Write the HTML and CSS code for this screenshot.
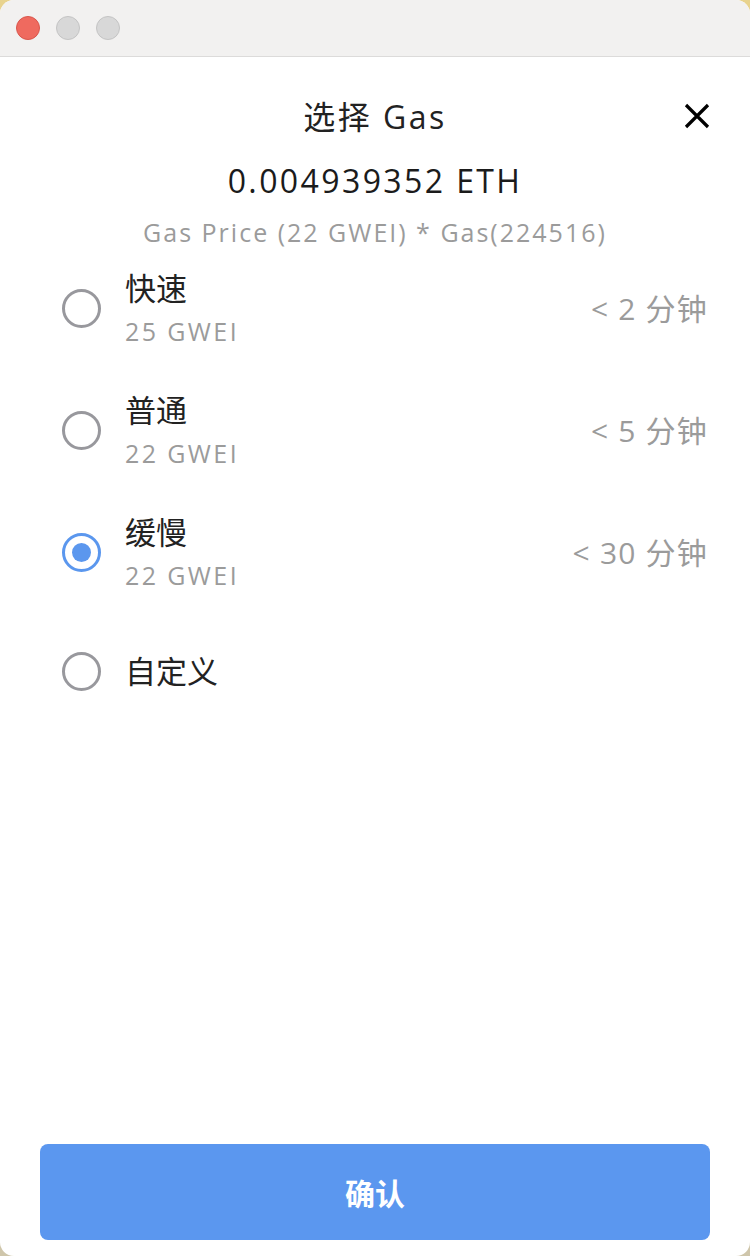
FILE: index.html
```html
<!DOCTYPE html>
<html lang="zh-CN">
<head>
    <meta charset="UTF-8">
    <meta name="viewport" content="width=device-width, initial-scale=1.0">
    <title>选择 Gas</title>
    <link rel="stylesheet" href="styles.css">
</head>
<body>
    <div class="window">
        <div class="titlebar">
            <span class="light red"></span>
            <span class="light"></span>
            <span class="light"></span>
        </div>
        <div class="content">
            <div class="header">
                <div class="title">选择 Gas</div>
                <button class="close" aria-label="close">
                    <svg width="26" height="26" viewBox="0 0 26 26">
                        <path d="M2 2 L24 24 M24 2 L2 24" stroke="#000" stroke-width="3.2" fill="none"/>
                    </svg>
                </button>
                <div class="amount">0.004939352 ETH</div>
                <div class="formula">Gas Price (22 GWEI) * Gas(224516)</div>
            </div>
            <div class="options">
                <div class="option">
                    <span class="radio"></span>
                    <div class="option-text">
                        <div class="option-name">快速</div>
                        <div class="option-price">25 GWEI</div>
                    </div>
                    <div class="option-time">&lt; 2 分钟</div>
                </div>
                <div class="option">
                    <span class="radio"></span>
                    <div class="option-text">
                        <div class="option-name">普通</div>
                        <div class="option-price">22 GWEI</div>
                    </div>
                    <div class="option-time">&lt; 5 分钟</div>
                </div>
                <div class="option">
                    <span class="radio checked"></span>
                    <div class="option-text">
                        <div class="option-name">缓慢</div>
                        <div class="option-price">22 GWEI</div>
                    </div>
                    <div class="option-time">&lt; 30 分钟</div>
                </div>
                <div class="option custom">
                    <span class="radio"></span>
                    <div class="option-text">
                        <div class="option-name">自定义</div>
                    </div>
                </div>
            </div>
        </div>
        <button class="confirm">确认</button>
    </div>
</body>
</html>
```

FILE: styles.css
```css
body {
    margin: 0;
    padding: 0;
    background: linear-gradient(#e8d38e, #cfc6ab);
    font-family: "Open Sans", "Noto Sans CJK SC", sans-serif;
}
.window {
    width: 750px;
    height: 1256px;
    background: #fff;
    border-radius: 14px;
    overflow: hidden;
    display: flex;
    flex-direction: column;
    box-sizing: border-box;
}
.titlebar {
    height: 56px;
    background: #f2f1f0;
    border-bottom: 1px solid #dcdbda;
    display: flex;
    align-items: center;
    gap: 16px;
    padding-left: 16px;
    flex-shrink: 0;
}
.light {
    width: 24px;
    height: 24px;
    border-radius: 50%;
    background: #d8d8d8;
    border: 1px solid #c4c4c4;
    box-sizing: border-box;
}
.light.red {
    background: #ef6a5f;
    border-color: #d9564c;
}
.content {
    flex: 1;
}
.header {
    position: relative;
    text-align: center;
    padding-top: 40px;
}
.title {
    font-size: 32px;
    line-height: 40px;
    color: #222;
    letter-spacing: 2.5px;
}
.close {
    position: absolute;
    top: 46px;
    right: 40px;
    background: none;
    border: none;
    padding: 0;
    width: 26px;
    height: 26px;
}
.amount {
    margin-top: 24px;
    font-size: 32px;
    line-height: 40px;
    color: #1b1b1b;
    letter-spacing: 2.4px;
    font-weight: 500;
}
.formula {
    margin-top: 16px;
    font-size: 25px;
    line-height: 30px;
    color: #9b9b9b;
    letter-spacing: 2px;
}
.options {
    padding: 0 42px 0 62px;
}
.option {
    display: flex;
    align-items: center;
    height: 122px;
}
.option.custom {
    height: 116px;
}
.radio {
    width: 39px;
    height: 39px;
    border: 3px solid #98989d;
    border-radius: 50%;
    box-sizing: border-box;
    display: flex;
    align-items: center;
    justify-content: center;
    flex-shrink: 0;
}
.radio.checked {
    border-color: #5b97ee;
}
.radio.checked::after {
    content: "";
    width: 19px;
    height: 19px;
    border-radius: 50%;
    background: #5b97ee;
}
.option-text {
    margin-left: 24px;
    flex: 1;
}
.option-name {
    font-size: 31px;
    line-height: 36px;
    color: #222;
}
.option-price {
    margin-top: 10px;
    font-size: 25px;
    line-height: 30px;
    color: #9b9b9b;
    letter-spacing: 2.4px;
}
.option-time {
    font-size: 30px;
    color: #9b9b9b;
    padding-bottom: 2px;
    letter-spacing: 1.2px;
}
.confirm {
    margin: 0 40px 16px;
    height: 96px;
    border: none;
    border-radius: 8px;
    background: #5b97ef;
    color: #fff;
    font-family: "Open Sans", "Noto Sans CJK SC", sans-serif;
    font-size: 30px;
    font-weight: bold;
    flex-shrink: 0;
}
```
